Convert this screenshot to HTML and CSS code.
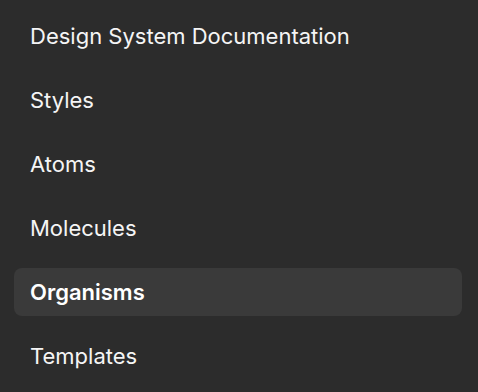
FILE: index.html
```html
<!DOCTYPE html>
<html lang="en">
<head>
    <meta charset="UTF-8">
    <title>Design System Navigation</title>
    <link rel="stylesheet" href="styles.css">
</head>
<body>
    <nav class="side-nav">
        <a class="nav-item" href="#">Design System Documentation</a>
        <a class="nav-item" href="#">Styles</a>
        <a class="nav-item" href="#">Atoms</a>
        <a class="nav-item" href="#">Molecules</a>
        <a class="nav-item active" href="#">Organisms</a>
        <a class="nav-item" href="#">Templates</a>
    </nav>
</body>
</html>
```

FILE: styles.css
```css
body {
    margin: 0;
    background: #2c2c2c;
    font-family: Inter, "Noto Sans", sans-serif;
}

.side-nav {
    display: flex;
    flex-direction: column;
    gap: 16px;
    padding: 12px 16px 0 14px;
}

.nav-item {
    display: flex;
    align-items: center;
    height: 48px;
    padding: 0 16px;
    border-radius: 8px;
    color: #f5f5f5;
    font-size: 22px;
    font-weight: 400;
    text-decoration: none;
}

.nav-item.active {
    background: #3a3a3a;
    font-weight: 600;
    color: #ffffff;
}
```
